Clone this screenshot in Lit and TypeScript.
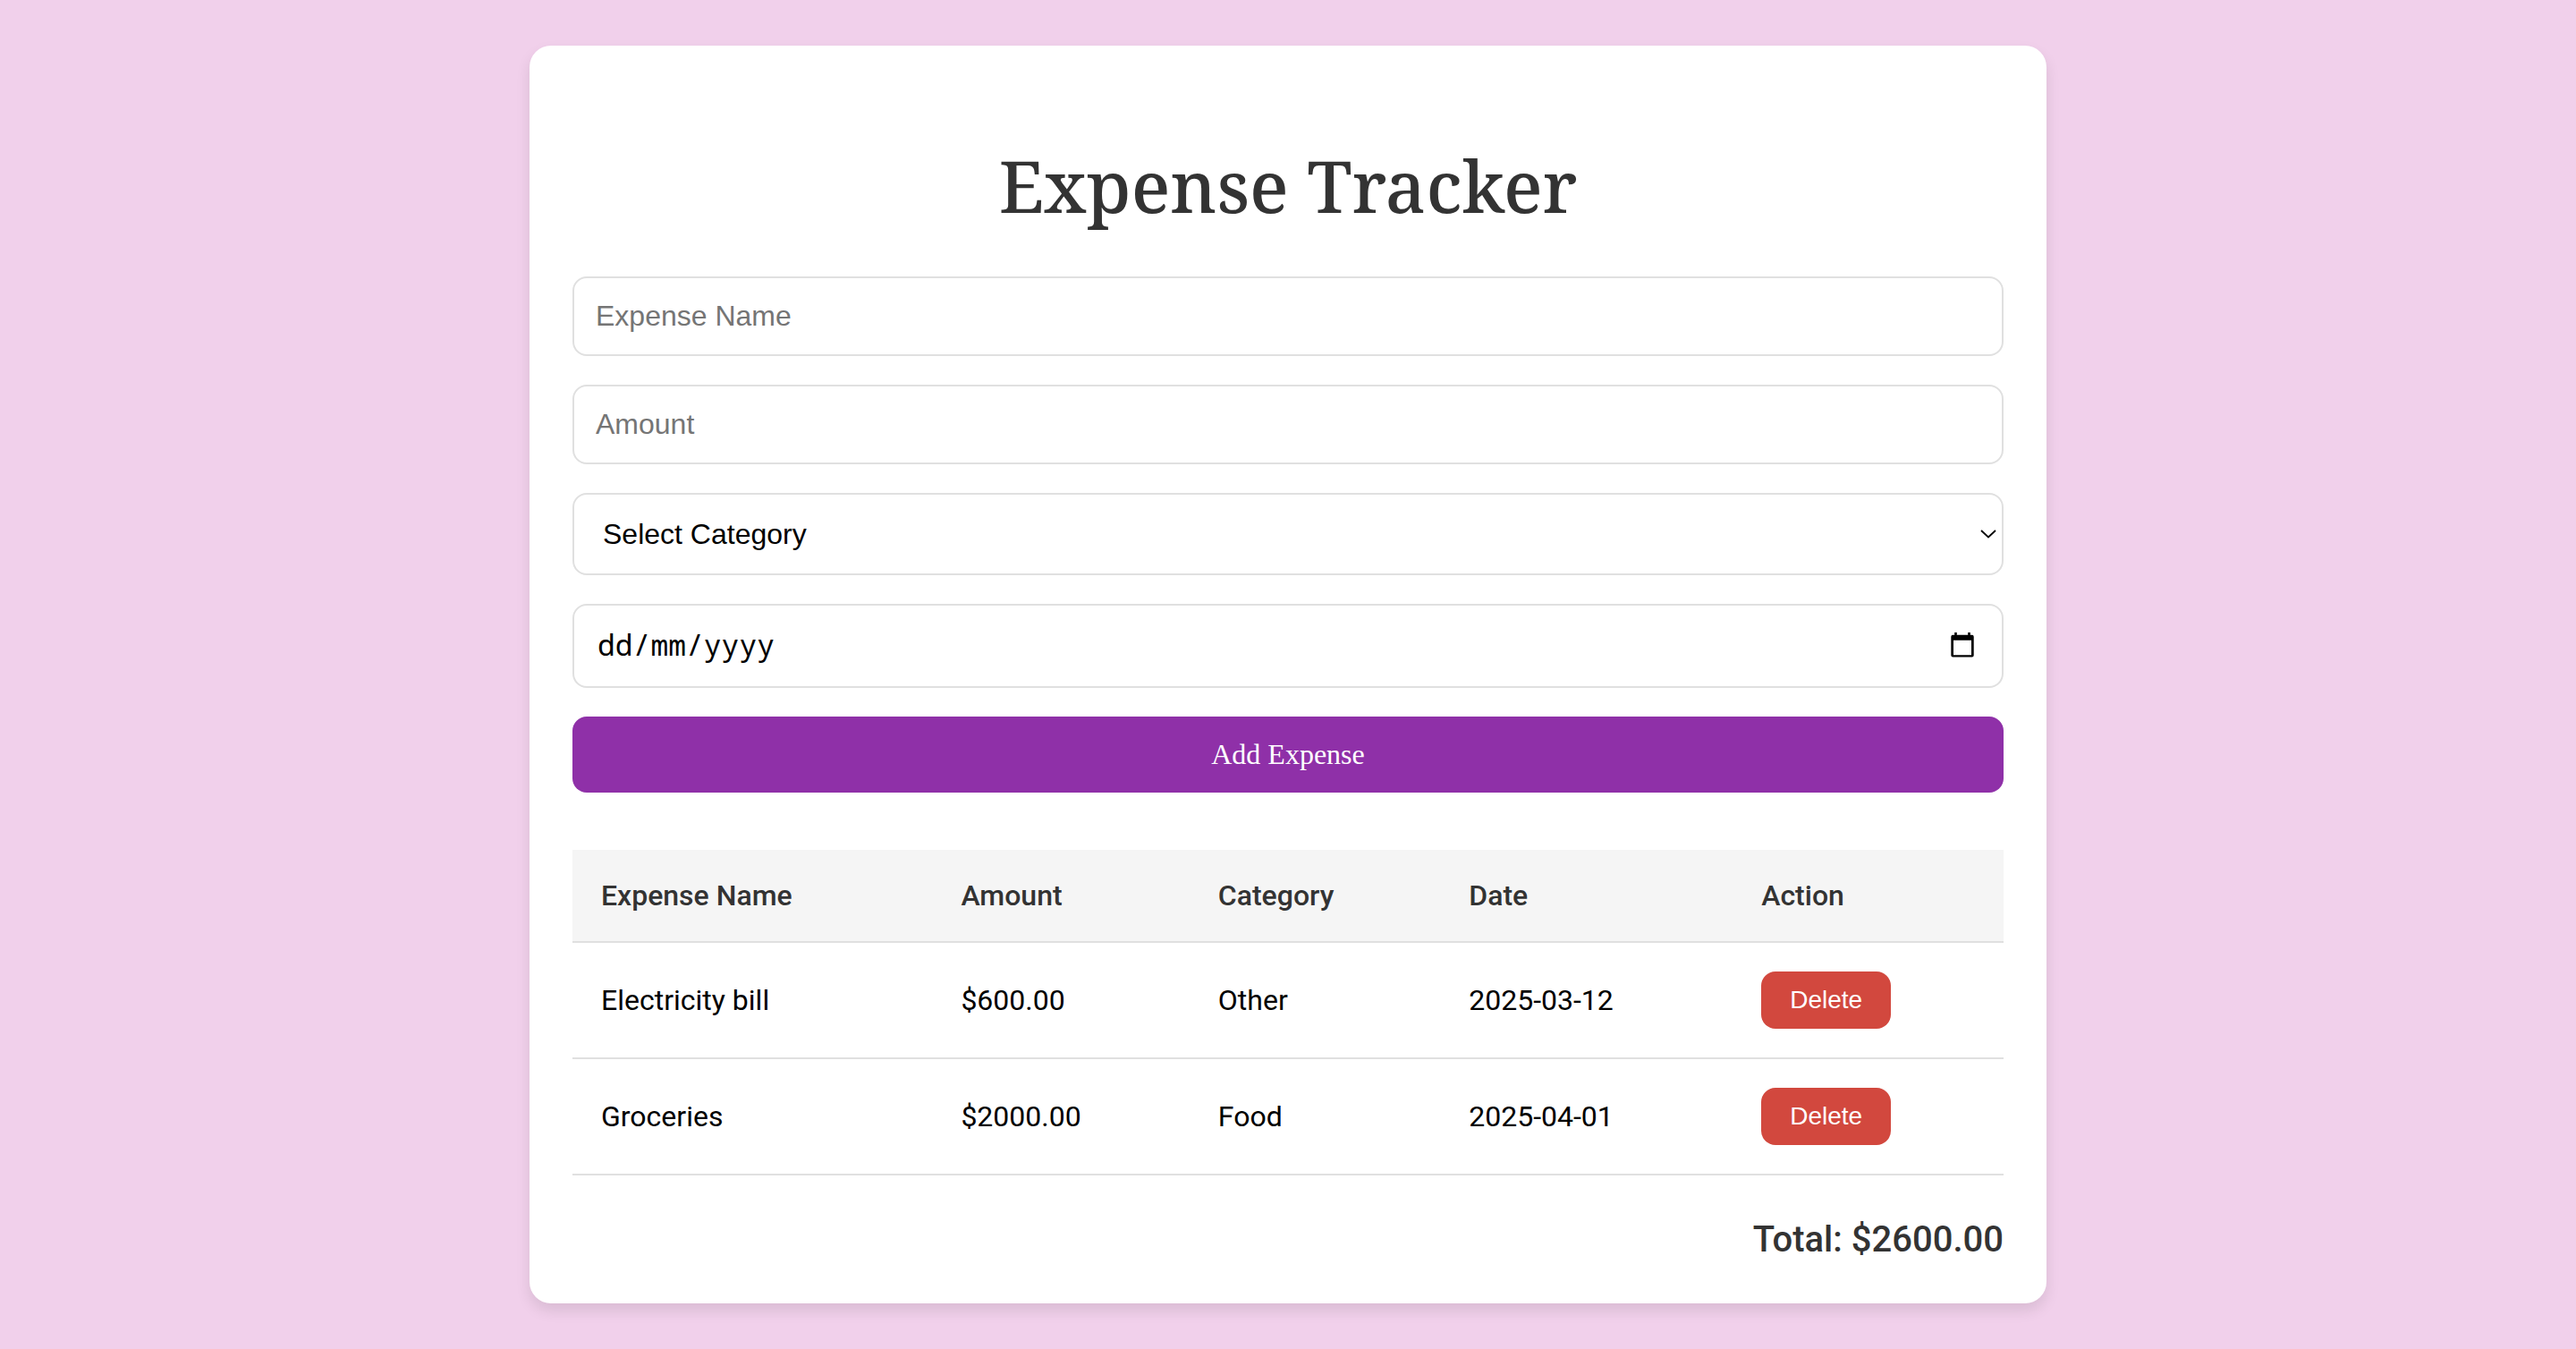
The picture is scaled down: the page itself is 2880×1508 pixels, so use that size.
import { LitElement, html, css } from "lit";
import { customElement, state } from "lit/decorators.js";

interface Expense {
  name: string;
  amount: number;
  category: string;
  date: string;
}

@customElement("app-root")
export class AppRoot extends LitElement {
  static styles = css`
    :host {
      display: flex;
      justify-content: center;
      align-items: center;
      min-height: 100vh;
      background: #f1d0eb;
      font-family: Roboto, sans-serif;
      font-size: 32px;
      color: #000;
    }
    * {
      box-sizing: border-box;
    }
    .card {
      width: 100%;
      max-width: 1696px;
      padding: 48px;
      background: #fff;
      border-radius: 24px;
      box-shadow: 0 8px 16px rgba(0, 0, 0, 0.1);
    }
    .title {
      margin: 53px 0 48px;
      font-family: "Noto Serif", "DejaVu Serif", serif;
      font-size: 80px;
      font-weight: 500;
      line-height: 109px;
      text-align: center;
      color: #333;
    }
    .form {
      display: flex;
      flex-direction: column;
      gap: 32px;
    }
    .field {
      display: grid;
      align-items: center;
    }
    .control,
    .icon {
      grid-area: 1 / 1;
    }
    .control {
      width: 100%;
      margin: 0;
      padding: 24px;
      border: 2px solid #e0e0e0;
      border-radius: 16px;
      background: #fff;
      font-family: "Liberation Sans", Arial, sans-serif;
      font-size: 32px;
      line-height: 37px;
      height: 89px;
      color: #000;
    }
    .control::placeholder {
      color: #757575;
      opacity: 1;
    }
    .select {
      appearance: none;
      height: 92px;
      padding: 24px 32px;
      line-height: 40px;
    }
    .date {
      height: 94px;
      padding: 22px 26px 26px;
      font-family: "Noto Sans Mono", "Roboto Mono", "DejaVu Sans Mono", monospace;
      font-size: 33px;
      line-height: 42px;
    }
    .date::placeholder {
      color: #000;
    }
    .icon {
      justify-self: end;
      display: block;
      padding: 0;
      border: 0;
      background: none;
      line-height: 0;
    }
    .chevron {
      margin-right: 8px;
      pointer-events: none;
    }
    .picker {
      margin-right: 30px;
      cursor: pointer;
    }
    .add {
      height: 85px;
      padding: 24px;
      border: 0;
      border-radius: 16px;
      background: #8f30a8;
      color: #fff;
      font-family: "Liberation Serif", "Times New Roman", serif;
      font-size: 32px;
      line-height: 37px;
      cursor: pointer;
    }
    .table {
      width: 100%;
      margin-top: 64px;
      border-collapse: collapse;
    }
    .cell {
      padding: 32px;
      border-bottom: 2px solid #e0e0e0;
      text-align: left;
      line-height: 38px;
    }
    .head {
      background: #f5f5f5;
      color: #333;
      font-weight: 500;
    }
    .delete {
      display: block;
      padding: 16px 32px;
      border: 0;
      border-radius: 16px;
      background: #d2483e;
      color: #fff;
      font-family: "Liberation Sans", Arial, sans-serif;
      font-size: 28px;
      line-height: 32px;
      cursor: pointer;
    }
    .total {
      margin-top: 48px;
      text-align: right;
      font-size: 40px;
      font-weight: 500;
      line-height: 47px;
      color: #333;
    }
  `;

  @state() private expenses: Expense[] = [
    { name: "Electricity bill", amount: 600, category: "Other", date: "2025-03-12" },
    { name: "Groceries", amount: 2000, category: "Food", date: "2025-04-01" },
  ];

  private remove(expense: Expense) {
    this.expenses = this.expenses.filter((e) => e !== expense);
  }

  render() {
    const total = this.expenses.reduce((sum, e) => sum + e.amount, 0);
    return html`
      <main class="card">
        <h1 class="title">Expense Tracker</h1>
        <form class="form" @submit=${(e: Event) => e.preventDefault()}>
          <input class="control" type="text" placeholder="Expense Name" aria-label="Expense Name" />
          <input class="control" type="text" inputmode="decimal" placeholder="Amount" aria-label="Amount" />
          <div class="field">
            <select class="control select" aria-label="Select Category">
              <option value="">Select Category</option>
              <option>Food</option>
              <option>Other</option>
            </select>
            <svg class="icon chevron" width="18" height="12" viewBox="0 0 18 12" aria-hidden="true">
              <path d="M1 2L9 9.500L17 2" fill="none" stroke="#000" stroke-width="1.800" />
            </svg>
          </div>
          <div class="field">
            <input class="control date" type="text" placeholder="dd/mm/yyyy" aria-label="Date" />
            <button class="icon picker" type="button" aria-label="Date">
              <svg width="32" height="32" viewBox="0 0 32 32" aria-hidden="true">
                <path
                  fill="#000"
                  fill-rule="evenodd"
                  d="M7.200 1H9.800V3.700H22.200V1H24.800V3.700H26.700q2 0 2 2V26.600q0 2-2 2H5.300q-2 0-2-2V5.700q0-2 2-2H7.200zM6 9.800V26.200H26V9.800z"
                />
              </svg>
            </button>
          </div>
          <button class="add" type="submit">Add Expense</button>
        </form>
        <table class="table">
          <thead>
            <tr>
              ${["Expense Name", "Amount", "Category", "Date", "Action"].map(
                (h) => html`<th class="cell head" scope="col">${h}</th>`
              )}
            </tr>
          </thead>
          <tbody>
            ${this.expenses.map(
              (e) => html`
                <tr>
                  <td class="cell">${e.name}</td>
                  <td class="cell">$${e.amount.toFixed(2)}</td>
                  <td class="cell">${e.category}</td>
                  <td class="cell">${e.date}</td>
                  <td class="cell">
                    <button class="delete" type="button" @click=${() => this.remove(e)}>Delete</button>
                  </td>
                </tr>
              `
            )}
          </tbody>
        </table>
        <div class="total">Total: $${total.toFixed(2)}</div>
      </main>
    `;
  }
}
